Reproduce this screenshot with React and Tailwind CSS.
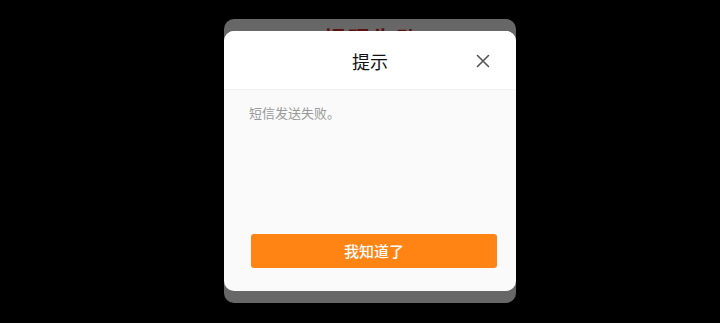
import React from 'react';

// Dialog "提示" shown over the dimmed page
const App = () => {
    return (
        <div className="relative w-full h-[323px] bg-black overflow-hidden" style={{ fontFamily: '"Noto Sans CJK SC", "Noto Sans", sans-serif' }}>
            {/* Page card behind the overlay */}
            <div className="absolute left-[224px] top-[19px] w-[292px] h-[284px] rounded-[10px] bg-[#676767] flex justify-center pt-[4px]">
                <span className="text-[22px] leading-[28px] font-bold text-[#5c1212] tracking-[2px] ml-[4px]">提现失败</span>
            </div>

            {/* Dialog */}
            <div className="absolute left-[224px] top-[31px] w-[292px] h-[260px] rounded-[10px] bg-[#fafafa] overflow-hidden flex flex-col">
                <div className="relative h-[59px] bg-white border-b border-[#f2f2f2] flex items-center justify-center">
                    <span className="text-[18px] leading-[24px] text-[#111] mt-[2px]">提示</span>
                    <button className="absolute right-[26px] top-[23px] text-[#555]">
                        <svg width="14" height="14" viewBox="0 0 14 14" fill="none" stroke="currentColor" strokeWidth="1.6" strokeLinecap="round">
                            <path d="M1.5 1.5l11 11M12.5 1.5l-11 11" />
                        </svg>
                    </button>
                </div>
                <div className="flex-1 flex flex-col px-[25px] pt-[13px]">
                    <p className="text-[13px] leading-[20px] text-[#999]">短信发送失败。</p>
                    <div className="flex-1" />
                    <button className="ml-[2px] mr-[-6px] mb-[23px] h-[34px] rounded-[3px] bg-[#ff8413] text-white text-[15px] font-medium">我知道了</button>
                </div>
            </div>
        </div>
    );
};

export default App;
